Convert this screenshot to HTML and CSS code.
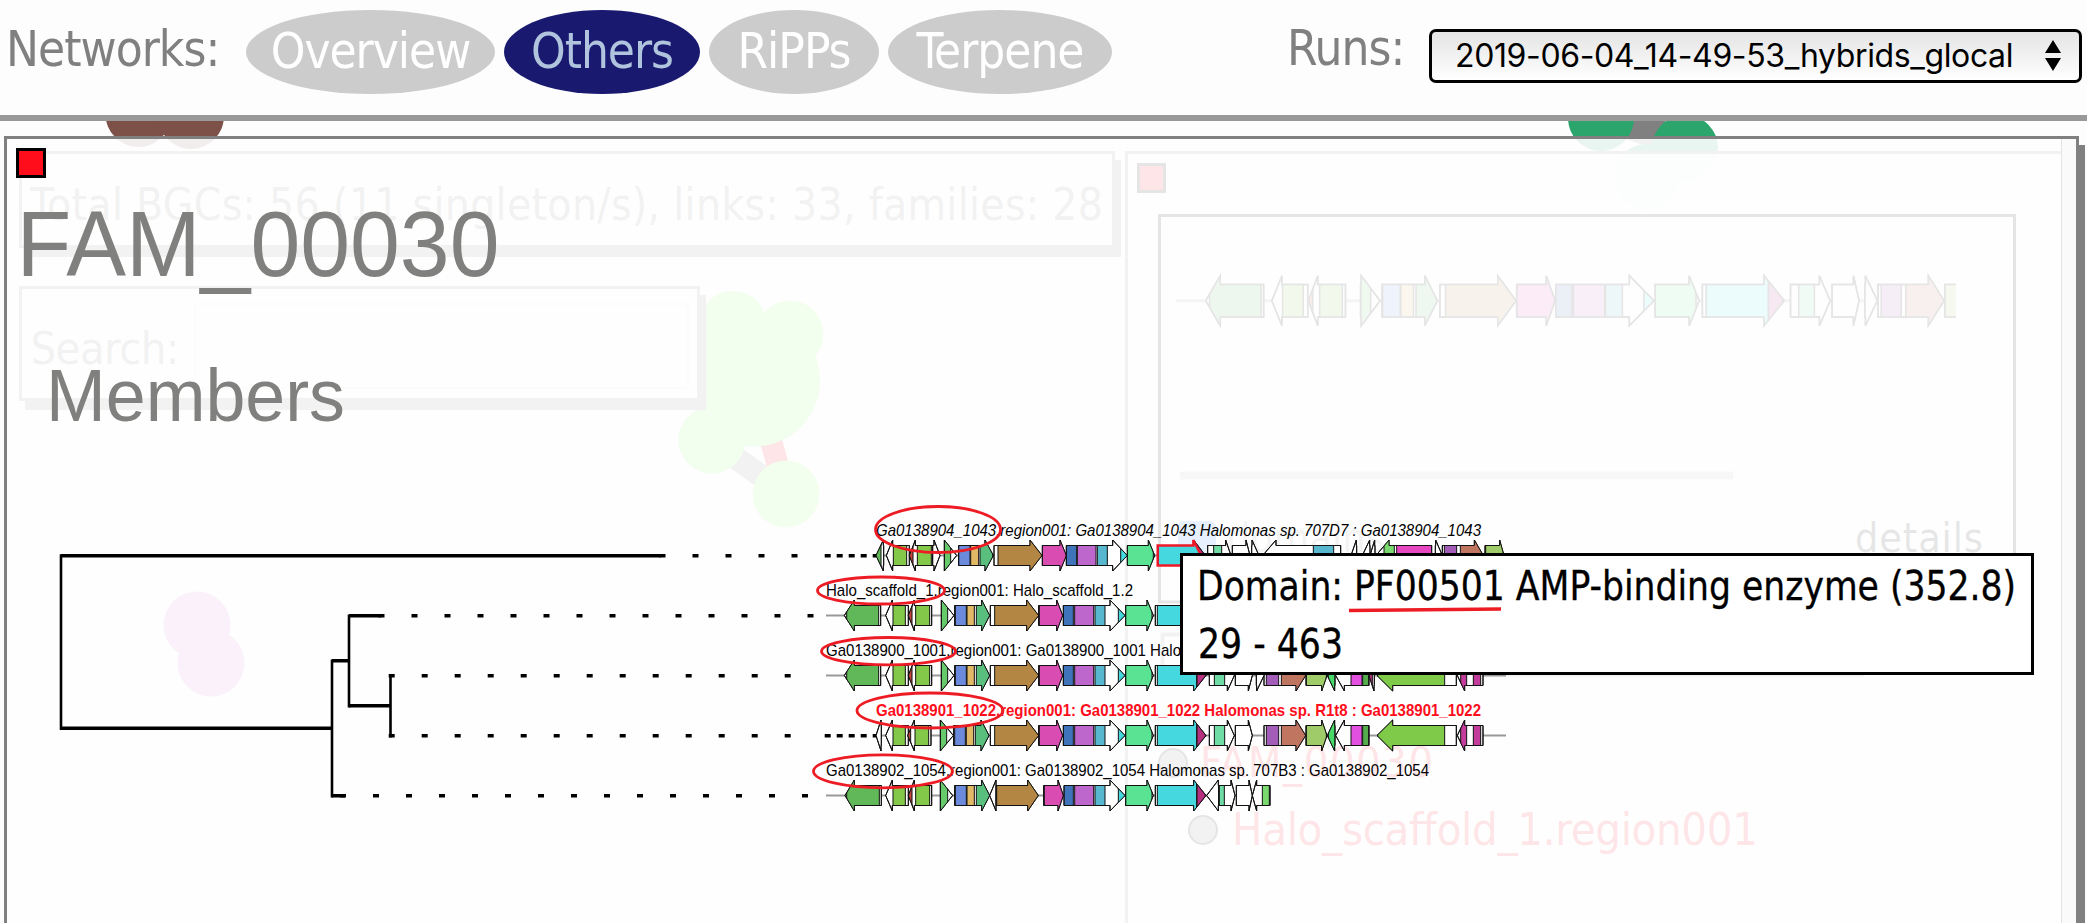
FILE: index.html
```html
<!DOCTYPE html>
<html lang="en"><head><meta charset="utf-8"><title>FAM_00030</title>
<link rel="stylesheet" href="styles.css"></head>
<body>
<header class="topbar">
  <div class="networks"><span class="label">Networks:</span>
    <nav class="tabs"><a class="tab t1">Overview</a><a class="tab t2 active">Others</a><a class="tab t3">RiPPs</a><a class="tab t4">Terpene</a></nav>
  </div>
  <div class="runs"><span class="label">Runs:</span>
    <div class="select"><span>2019-06-04_14-49-53_hybrids_glocal</span>
      <svg class="arrows" width="16" height="32" viewBox="0 0 16 32"><path d="M0 13 8 0l8 13zM0 18h16L8 31z"/></svg></div>
  </div>
</header>
<main class="stage">
  <svg class="layer" viewBox="0 121 2087 802" width="2087" height="802">
    <g fill="#7d5148"><circle cx="138.500" cy="114" r="33"/><circle cx="191" cy="116" r="33"/></g>
    <path d="M1601 118 1685 149" stroke="#808080" stroke-width="22"/><path d="M1685 149 1647 177M1601 118 1665 121" stroke="#808080" stroke-width="20"/>
    <g fill="#2ca56d"><circle cx="1601" cy="118" r="33"/><circle cx="1685" cy="148" r="33"/><circle cx="1647" cy="177" r="33"/></g>
    <path d="M711 440 786 494" stroke="#808080" stroke-width="23"/><path d="M754 381 786 494" stroke="#ff0015" stroke-width="22"/>
    <g fill="#88fa5a"><circle cx="733" cy="324.500" r="33.500"/><circle cx="790" cy="334" r="33.500"/><circle cx="754" cy="380.500" r="66"/><circle cx="712" cy="440" r="33.500"/><circle cx="786" cy="494" r="33.500"/></g>
    <g fill="#d67ad0"><circle cx="197" cy="625" r="33.500"/><circle cx="211" cy="663" r="33.500"/></g>
    <g fill="#ffc4cc"><circle cx="2016" cy="748" r="33"/><circle cx="1980" cy="823" r="33"/></g>
  </svg>
  <section class="ghost stats"><svg width="1090" height="90"><text x="8" y="65.500" font-size="44" textLength="1073">Total BGCs: 56 (11 singleton/s), links: 33, families: 28</text></svg></section>
  <section class="ghost search"><svg width="675" height="108"><text x="8.500" y="74.500" font-size="45" textLength="149">Search:</text><rect x="173" y="15" width="493" height="84" class="field"/></svg></section>
  <section class="info"></section>
  <svg class="layer" viewBox="0 121 2087 802" width="2087" height="802">
    <rect x="1138.500" y="164.500" width="26" height="27" fill="#ff0015" stroke="#000" stroke-width="3"/>
    <path d="M1159.500 602V215.500H2014.500V602z" fill="none" stroke="#000" stroke-width="3"/>
    <g id="preview"></g>
    <path d="M1180 475.500H1733" stroke="#bbb" stroke-width="8"/>
    <rect x="1178" y="521" width="38" height="38" rx="6" fill="#1670ff"/>
    <rect x="1162.500" y="634.500" width="700" height="40" fill="none" stroke="#808080" stroke-width="4"/>
    <g class="faint"><text x="1227" y="552" font-size="41" textLength="158">domains</text></g>
    <text x="1855" y="551.500" font-size="41" fill="#111" textLength="128">details</text>
    <g fill="#888" stroke="#000" stroke-width="2"><circle cx="1173" cy="763" r="14"/><circle cx="1203" cy="830" r="14"/></g>
    <g fill="#ff0015"><text x="1200" y="777" font-size="43" textLength="233">FAM_00030</text><text x="1232" y="844.500" font-size="45" textLength="526">Halo_scaffold_1.region001</text></g>
  </svg>
  <section class="panel">
    <button class="close" aria-label="close"></button>
    <div class="scrollbar"></div>
  </section>
  <svg class="layer" viewBox="0 121 2087 802" width="2087" height="802">
    <g class="head"><text x="16.500" y="275.700" font-size="92" textLength="483" lengthAdjust="spacingAndGlyphs">FAM_00030</text><text x="46" y="420.700" font-size="74" textLength="299" lengthAdjust="spacingAndGlyphs">Members</text></g>
    <g class="tree">
      <path d="M61 554.200V730M332 659.500V797.500M349 614.500V707.500M390.500 674.200V737.500" stroke-width="2.600"/>
      <path d="M61 555.800H661M61 728.300H332M332 660.800H349M349 615.800H381M349 705.800H390M332 795.800H345"/>
      <path class="dots" d="M659.500 555.800H820M378.500 615.800H820M388.700 675.800H800M388.700 735.800H800M340 795.800H820"/>
      <path class="dash" d="M824.700 555.800H876M824.700 735.800H876"/>
    </g>
    <g id="clusters"></g>
    <g class="names">
      <text x="876" y="535.700" font-style="italic" textLength="605" lengthAdjust="spacingAndGlyphs">Ga0138904_1043.region001: Ga0138904_1043 Halomonas sp. 707D7 : Ga0138904_1043</text>
      <text x="826" y="595.700" textLength="307" lengthAdjust="spacingAndGlyphs">Halo_scaffold_1.region001: Halo_scaffold_1.2</text>
      <text x="826" y="655.700" textLength="355" lengthAdjust="spacingAndGlyphs">Ga0138900_1001.region001: Ga0138900_1001 Halo</text>
      <text x="876" y="715.700" class="sel" textLength="605" lengthAdjust="spacingAndGlyphs">Ga0138901_1022.region001: Ga0138901_1022 Halomonas sp. R1t8 : Ga0138901_1022</text>
      <text x="826" y="775.700" textLength="603" lengthAdjust="spacingAndGlyphs">Ga0138902_1054.region001: Ga0138902_1054 Halomonas sp. 707B3 : Ga0138902_1054</text>
    </g>
    <g class="marks"><ellipse cx="938" cy="529.500" rx="62.500" ry="23"/><ellipse cx="881" cy="590.500" rx="63.500" ry="13.500"/><ellipse cx="888.500" cy="651.200" rx="67" ry="13.700"/><ellipse cx="930" cy="710.500" rx="73" ry="17.500"/><ellipse cx="883" cy="771.300" rx="69.500" ry="16.500"/></g>
  </svg>
  <div class="tooltip"><svg width="848" height="116"><text x="14" y="44" font-size="40" textLength="819" lengthAdjust="spacingAndGlyphs">Domain: PF00501 AMP-binding enzyme (352.8)</text><text x="15" y="101.500" font-size="40" textLength="145" lengthAdjust="spacingAndGlyphs">29 - 463</text><path d="M166 54.500 318 53" stroke="#ed1c24" stroke-width="3.500"/></svg></div>
</main>
<script src="genes.js"></script>
</body></html>
```
FILE: styles.css
```css
*{box-sizing:border-box}
body{margin:0;width:2087px;height:923px;overflow:hidden;background:#fdfdfd;font-family:"DejaVu Sans Condensed","DejaVu Sans",sans-serif;font-stretch:condensed;color:#808080}
.topbar{height:121px;border-bottom:6px solid #999;display:flex;justify-content:space-between;padding:10px 5px 0 5px}
.networks,.runs{display:flex}
.label{font-size:49px;line-height:84px;white-space:nowrap;margin-top:-2px;letter-spacing:-.95px}
.networks .label{width:241px;padding-left:1px}
.tabs{display:flex;gap:9px}
.tab{height:84px;line-height:84px;border-radius:50%;background:#ccc;color:#fff;font-size:49px;text-align:center;letter-spacing:-1px}
.tab.active{background:#191970;color:#b0c4de}
.t1{width:249px}.t2{width:196px}.t3{width:170px}.t4{width:224px}
.runs .label{width:142px;margin-top:-3px}
.select{width:653px;height:54px;margin-top:19px;border:3px solid #000;border-radius:7px;background:linear-gradient(#e4e4e4,#fff);color:#000;font:32px/46px Inter,sans-serif;letter-spacing:-.38px;display:flex;justify-content:space-between;align-items:center;padding:0 18px 0 23px}
.arrows{display:block}
.stage{position:relative;height:802px;overflow:hidden}
.layer{position:absolute;left:0;top:0;display:block}
.ghost{position:absolute;left:19px;background:#fff;border:3px solid #808080;box-shadow:6px 9px 0 #808080;fill:#808080}
.ghost svg{display:block}
.stats{top:30px;width:1096px;height:97px}
.search{top:165px;width:681px;height:115px}
.field{fill:none;stroke:#ccc;stroke-width:1}
.info{position:absolute;left:1125px;top:30px;width:960px;height:900px;border:3px solid #808080;background:rgba(255,255,255,.9)}
.faint{opacity:.45}
.panel{position:absolute;left:4px;top:15px;width:2075px;height:900px;border:3px solid #808080;background:rgba(254,254,254,.9);box-shadow:6px 9px 0 #808080;display:flex;justify-content:space-between;align-items:flex-start;padding:9px 0 0 9px}
.close{width:30px;height:30px;padding:0;border:3px solid #000;background:#ff0d1b}
.scrollbar{width:15px;height:890px;margin-top:-9px;background:#fafafa;border-left:1px solid #e4e4e4}
.head{fill:#80807e;font-family:"Liberation Sans",sans-serif}
.tree{fill:none;stroke:#000;stroke-width:3.400}
.dots{stroke-dasharray:6 27}
.dash{stroke-dasharray:6 6}
.names{font:15.700px "Liberation Sans",sans-serif;fill:#000}
.sel{font-weight:bold;fill:#ff0d1b}
.marks{fill:none;stroke:#ed1c24;stroke-width:2.800}
.tooltip{position:absolute;left:1180px;top:432px;width:854px;height:122px;border:3px solid #000;background:#fff;color:#000}
.tooltip svg{display:block}
.tooltip text{stroke:#000;stroke-width:.3}
```
FILE: genes.js
```js
// Gene: [start, end, direction, neck, [[domainStart, domainEnd, colour], ...], outline]
const NS = 'http://www.w3.org/2000/svg';
const C = {g:'#60b858',l:'#84c84a',r:'#c0453a',m:'#66c96c',b:'#6b8adb',t:'#e0b866',e:'#5abf7d',n:'#b38743',p:'#d94db3',u:'#3f74ba',v:'#bd66cc',w:'#56b7cf',c:'#45d9df',a:'#5ae392',k:'#b5307f',s:'#6fdba5',o:'#a35cb8',q:'#bf7560',y:'#a0cb69',x:'#48d96a',z:'#e250e2',h:'#55ad4c',i:'#7fcb49',j:'#c33c9c',d:'#7ad96e',f:'#e646c0'};
let id = 0;
function el(p, n, a) { const e = document.createElementNS(NS, n); for (const k in a) e.setAttribute(k, a[k]); p.appendChild(e); return e; }
function row(host, cy, x0, k, b, h, base, genes, ink, sw) {
  const X = u => x0 + u / k;
  base.forEach(([s, e]) => el(host, 'path', {d: `M${X(s)} ${cy}H${X(e)}`, stroke: '#999', 'stroke-width': sw * 2}));
  genes.forEach(([s, e, dir, neck, doms = [], hot]) => {
    const [A, Z] = dir > 0 ? [X(s), X(e)] : [X(e), X(s)], N = X(neck);
    const d = `M${A} ${cy - b}H${N}V${cy - h}L${Z} ${cy}L${N} ${cy + h}V${cy + b}H${A}Z`;
    el(host, 'path', {d, fill: '#fff', stroke: hot ? '#b33' : ink, 'stroke-width': sw});
    const cp = el(host, 'clipPath', {id: 'c' + ++id}); el(cp, 'path', {d});
    const g = el(host, 'g', {'clip-path': `url(#c${id})`});
    doms.forEach(([p, q, c]) => el(g, 'rect', {x: X(p), y: cy - h, width: X(q) - X(p), height: 2 * h, fill: C[c], stroke: ink, 'stroke-width': sw}));
    el(host, 'path', {d, fill: 'none', stroke: hot ? '#f01828' : ink, 'stroke-width': hot ? 2.4 : sw});
  });
}
const start = [[133,242,-1,163,[[140,236,'g']]]];
const two = [[257,325,-1,277,[[279,316,'l']]],[325,395,-1,343,[[325,336,'r'],[347,389,'l']]]];
const four = [[424,462,1,424,[[424,443,'m']]],[464,569,1,545,[[466,499,'b'],[501,523,'t'],[529,569,'e']]]];
const core = [[571,716,1,680,[[584,716,'n']]],[716,788,1,770,[[718,788,'p']]],[790,975,1,930,[[790,820,'u'],[824,881,'v'],[885,915,'w'],[955,975,'c']]]];
const amp = [[977,1060,1,1041,[[977,1056,'a']]],[1066,1218,1,1181,[[1072,1190,'c'],[1191,1216,'k']]]];
const tail = [[1228,1303,1,1282,[[1243,1274,'s']]],[1306,1357,1,1345],[1392,1517,1,1488,[[1399,1436,'o'],[1444,1517,'q']]],[1518,1581,1,1565,[[1519,1579,'y']]],[1582,1605,-1,1604,[[1585,1605,'x']]],[1607,1707,-1,1633,[[1653,1686,'z'],[1688,1706,'h']]],[1731,1969,-1,1778,[[1733,1934,'i']]],[1972,2049,-1,1994,[[1982,2000,'j'],[2020,2042,'j']]]];
const host = document.getElementById('clusters');
const put = (i, base, genes) => row(host, 555.5 + 60 * i, 800, 3, 10, 15.5, base, genes, '#111', 1);
put(0, [[228,2112]], [[228,251,-1,250,[[228,243,'g']]],[259,328,-1,278,[[280,320,'l']]],[328,398,-1,346,[[328,339,'r'],[352,394,'l']]],[398,420,1,402],[433,470,1,433,[[433,452,'m']]],[476,580,1,555,[[476,510,'b'],[512,536,'t'],[540,578,'e']]],[582,726,1,690,[[594,726,'n']]],[727,799,1,780,[[727,799,'p']]],[799,982,1,938,[[799,830,'u'],[832,888,'v'],[892,922,'w'],[962,982,'c']]],[982,1064,1,1045,[[982,1060,'a']]],
 [1223,1293,1,1277,[[1241,1265,'s']]],[1297,1350,1,1338],[1355,1377,1,1356],[1388,1622,-1,1428,[[1540,1601,'w']]],[1653,1670,-1,1669],[1687,1710,-1,1709],[1710,1725,-1,1724],[1728,1895,-1,1767,[[1752,1783,'d'],[1790,1895,'f']]],[1906,1927,1,1907],[1927,2050,1,2023,[[1933,1970,'o'],[1981,2048,'q']]],[2055,2112,1,2099,[[2057,2110,'y']]],[1180,1216,1,1181,[[1182,1216,'k']]],[1073,1203,1,1180,[[1075,1203,'c']],1]]);
put(1, [[78,2118]], [...start,...two,...four,...core,...amp]);
put(2, [[78,2118]], [...start,...two,...four,...core,...amp,...tail,[1369,1392,1,1370],[1707,1723,-1,1722,[[1707,1717,'k']]]]);
put(3, [[228,2118]], [[228,244,-1,243],two[0],[323,393,-1,343,[[323,332,'r'],[345,386,'l']]],[421,460,1,421,[[421,440,'m']]],[461,567,1,543,[[464,496,'b'],[499,521,'t'],[526,567,'e']]],...core,...amp,...tail]);
put(4, [[78,1400]], [[135,244,-1,163,[[140,238,'g']]],...two,[421,458,1,421,[[421,443,'m']]],four[1],[569,589,-1,588],[588,715,1,683,[[590,715,'n']]],[731,790,1,774,[[733,790,'p']]],[792,975,1,930,[[792,820,'u'],[824,881,'v'],[885,915,'w'],[955,975,'c']]],...amp,[1220,1256,-1,1255],[1256,1305,1,1293,[[1258,1273,'s']]],[1309,1357,1,1347],[1357,1410,-1,1370,[[1387,1408,'d']]]]);
const pre = document.getElementById('preview');
const clip = el(pre, 'clipPath', {id: 'view'}); el(clip, 'rect', {x: 1162, y: 218, width: 794, height: 300});
const pg = el(pre, 'g', {'clip-path': 'url(#view)'});
row(pg, 300.7, 1100, 1.5887, 16.3, 25, [[121,1340]], [[168,260,-1,191,[[174,256,'g']]],[273,330,-1,289,[[290,323,'l']]],[331,390,-1,346,[[331,338,'r'],[349,385,'l']]],[414,445,1,415,[[414,430,'m']]],[448,536,1,516,[[449,477,'b'],[478,498,'t'],[502,536,'e']]],[540,661,1,632,[[549,661,'n']]],[662,723,1,709,[[662,723,'p']]],[724,880,1,841,[[724,750,'u'],[752,802,'v'],[803,830,'w'],[864,880,'c']]],[882,952,1,936,[[882,947,'a']]],[957,1087,1,1055,[[963,1062,'c'],[1062,1085,'k']]],[1097,1160,1,1143,[[1110,1135,'s']]],[1163,1206,1,1197],[1215,1235,1,1216],[1236,1341,1,1316,[[1241,1273,'o'],[1280,1341,'q']]],[1342,1400,1,1390,[[1342,1400,'y']]]], '#000', 1.5);
```
